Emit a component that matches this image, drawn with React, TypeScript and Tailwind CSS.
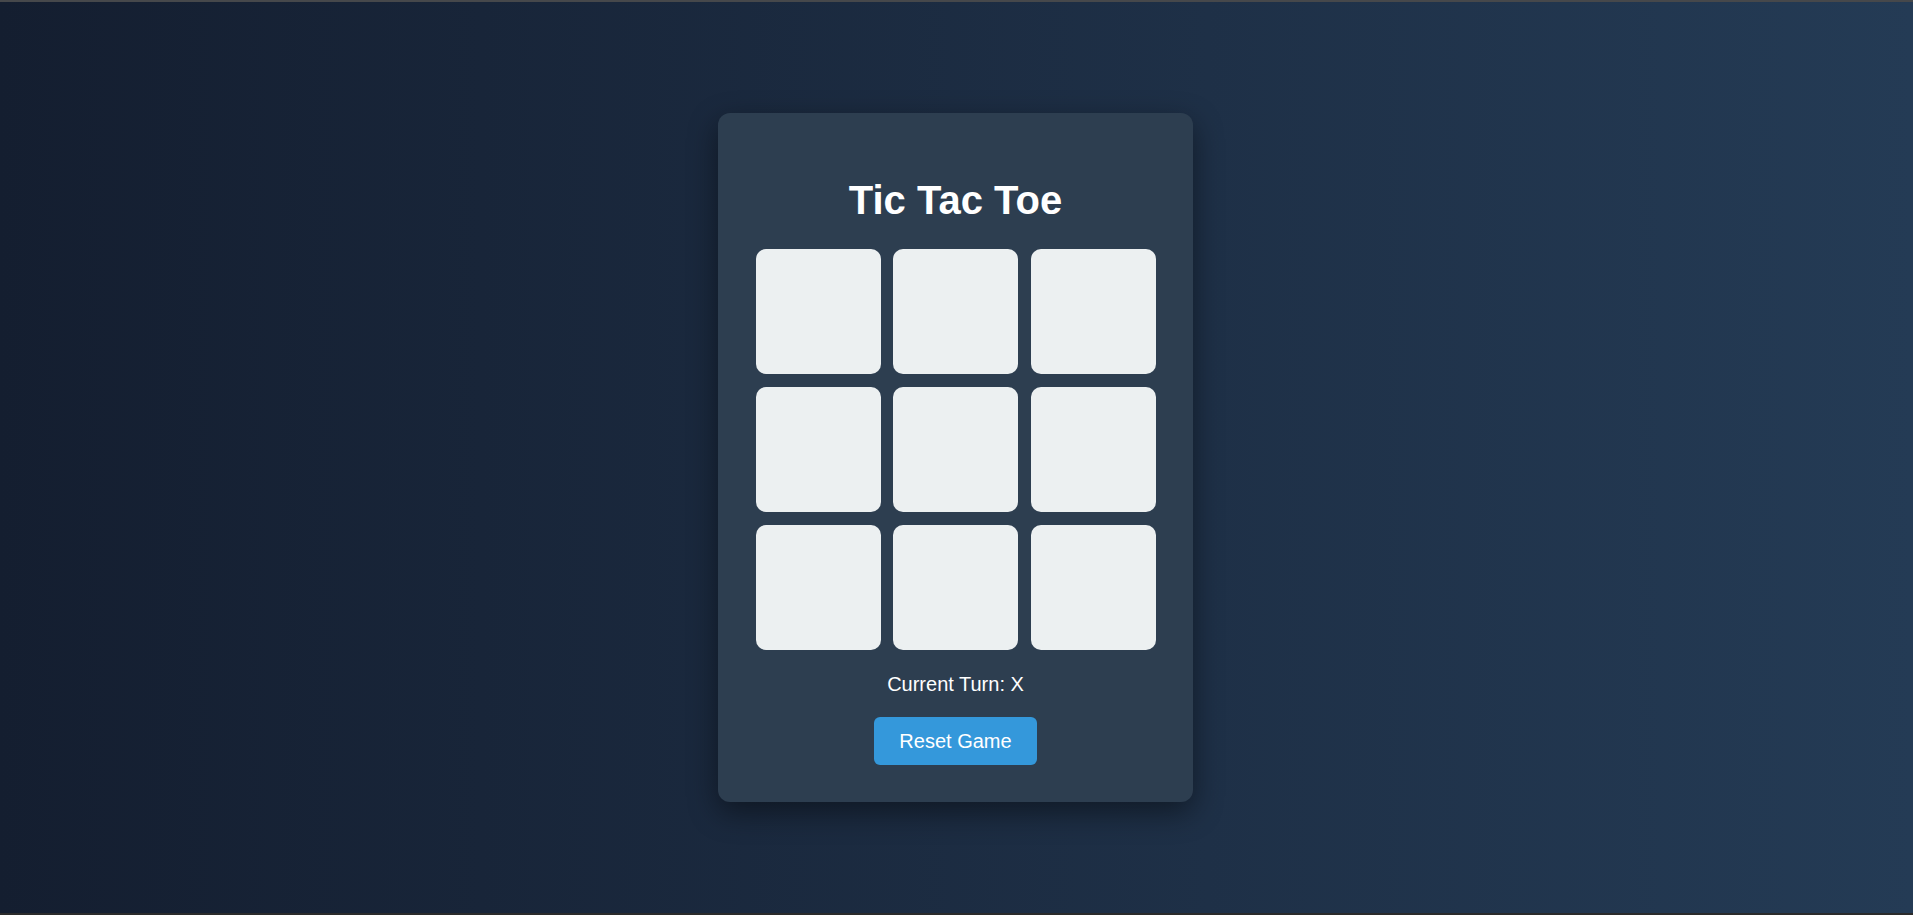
import React from "react";

export default function App() {
  const cells = Array.from({ length: 9 });
  return (
    <div
      className="flex h-[915px] w-full flex-col overflow-hidden"
      style={{ fontFamily: '"Liberation Sans", Arial, sans-serif' }}
    >
      <div className="h-[2px] w-full bg-[#46484b]" />
      <div className="flex flex-1 items-center justify-center bg-gradient-to-r from-[#141e30] to-[#243b55]">
        <div className="mr-[2px] flex w-[475px] flex-col items-center rounded-[12px] bg-[#2d3e50] pt-[64px] pb-[36.5px] shadow-[0_10px_30px_rgba(0,0,0,0.45)]">
          <h1 className="text-[40px] font-bold leading-[46px] text-white">Tic Tac Toe</h1>
          <div className="mt-[26px] grid grid-cols-[125px_125px_125px] gap-x-[12.5px] gap-y-[12.8px]">
            {cells.map((_, i) => (
              <button
                key={i}
                className="h-[125px] w-[125px] rounded-[10px] bg-[#ecf0f1]"
              />
            ))}
          </div>
          <p className="mt-[23.5px] text-[20px] leading-[23px] text-white">Current Turn: X</p>
          <button className="mt-[21px] h-[48px] rounded-[6px] bg-[#3498db] px-[25px] text-[20px] text-white">
            Reset Game
          </button>
        </div>
      </div>
      <div className="h-[2px] w-full bg-[#2b2b2b]" />
    </div>
  );
}
